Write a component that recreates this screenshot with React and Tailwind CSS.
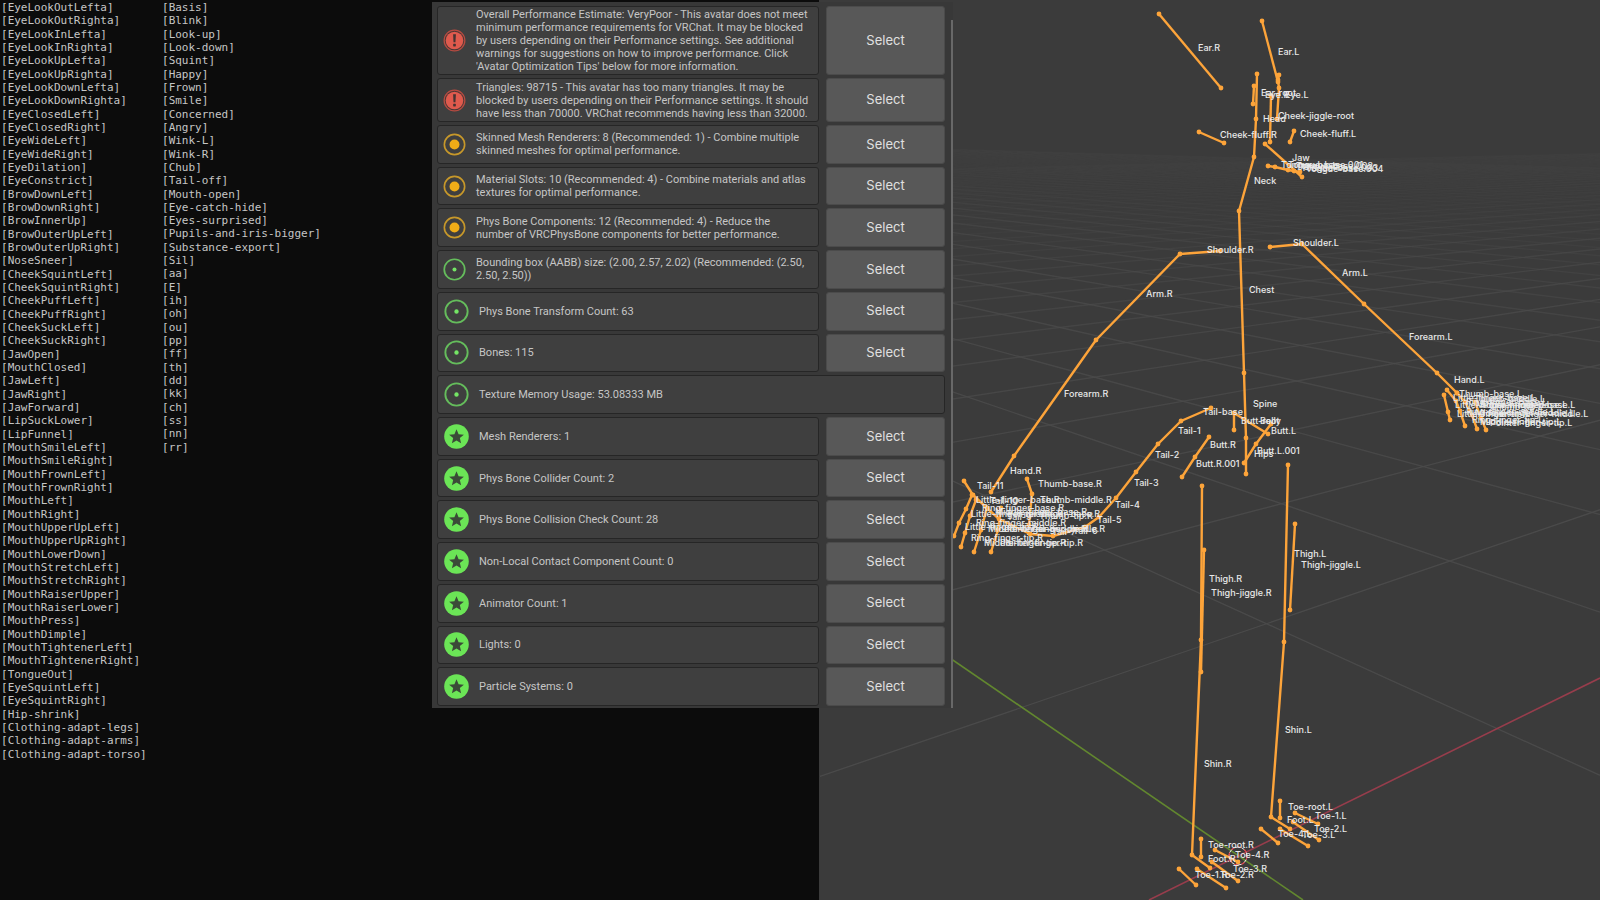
const SHAPE_KEYS = [
    "EyeLookOutLefta", "EyeLookOutRighta", "EyeLookInLefta", "EyeLookInRighta",
    "EyeLookUpLefta", "EyeLookUpRighta", "EyeLookDownLefta", "EyeLookDownRighta",
    "EyeClosedLeft", "EyeClosedRight", "EyeWideLeft", "EyeWideRight",
    "EyeDilation", "EyeConstrict", "BrowDownLeft", "BrowDownRight",
    "BrowInnerUp", "BrowOuterUpLeft", "BrowOuterUpRight", "NoseSneer",
    "CheekSquintLeft", "CheekSquintRight", "CheekPuffLeft", "CheekPuffRight",
    "CheekSuckLeft", "CheekSuckRight", "JawOpen", "MouthClosed",
    "JawLeft", "JawRight", "JawForward", "LipSuckLower",
    "LipFunnel", "MouthSmileLeft", "MouthSmileRight", "MouthFrownLeft",
    "MouthFrownRight", "MouthLeft", "MouthRight", "MouthUpperUpLeft",
    "MouthUpperUpRight", "MouthLowerDown", "MouthStretchLeft", "MouthStretchRight",
    "MouthRaiserUpper", "MouthRaiserLower", "MouthPress", "MouthDimple",
    "MouthTightenerLeft", "MouthTightenerRight", "TongueOut", "EyeSquintLeft",
    "EyeSquintRight", "Hip-shrink", "Clothing-adapt-legs", "Clothing-adapt-arms",
    "Clothing-adapt-torso",
];

const EXPRESSION_KEYS = [
    "Basis", "Blink", "Look-up", "Look-down", "Squint", "Happy", "Frown", "Smile",
    "Concerned", "Angry", "Wink-L", "Wink-R", "Chub", "Tail-off", "Mouth-open",
    "Eye-catch-hide", "Eyes-surprised", "Pupils-and-iris-bigger", "Substance-export",
    "Sil", "aa", "E", "ih", "oh", "ou", "pp", "ff", "th", "dd", "kk", "ch", "ss",
    "nn", "rr",
];

const WARNINGS = [
    {
        level: "error",
        text: "Overall Performance Estimate: VeryPoor - This avatar does not meet\nminimum performance requirements for VRChat. It may be blocked\nby users depending on their Performance settings. See additional\nwarnings for suggestions on how to improve performance. Click\n'Avatar Optimization Tips' below for more information.",
    },
    {
        level: "error",
        text: "Triangles: 98715 - This avatar has too many triangles. It may be\nblocked by users depending on their Performance settings. It should\nhave less than 70000. VRChat recommends having less than 32000.",
    },
];

const STATS = [
    {level: "medium", text: "Skinned Mesh Renderers: 8 (Recommended: 1) - Combine multiple\nskinned meshes for optimal performance."},
    {level: "medium", text: "Material Slots: 10 (Recommended: 4) - Combine materials and atlas\ntextures for optimal performance."},
    {level: "medium", text: "Phys Bone Components: 12 (Recommended: 4) - Reduce the\nnumber of VRCPhysBone components for better performance."},
    {level: "good", text: "Bounding box (AABB) size: (2.00, 2.57, 2.02) (Recommended: (2.50,\n2.50, 2.50))"},
    {level: "good", short: true, text: "Phys Bone Transform Count: 63"},
    {level: "good", short: true, text: "Bones: 115"},
    {level: "good", short: true, noSelect: true, text: "Texture Memory Usage: 53.08333 MB"},
    {level: "excellent", short: true, text: "Mesh Renderers: 1"},
    {level: "excellent", short: true, text: "Phys Bone Collider Count: 2"},
    {level: "excellent", short: true, text: "Phys Bone Collision Check Count: 28"},
    {level: "excellent", short: true, text: "Non-Local Contact Component Count: 0"},
    {level: "excellent", short: true, text: "Animator Count: 1"},
    {level: "excellent", short: true, text: "Lights: 0"},
    {level: "excellent", short: true, text: "Particle Systems: 0"},
];

// Each chain is a list of joints, drawn with a dot on every joint
const BONES = [
    [[1159, 14], [1221, 88]],
    [[1262, 21], [1278, 82]],
    [[1279, 75], [1278, 80], [1279, 88], [1277, 119]],
    [[1271, 96], [1270, 142]],
    [[1254, 86], [1253, 104]],
    [[1257, 74], [1256, 119], [1254, 157], [1239, 211], [1244, 373], [1246, 438], [1246, 474]],
    [[1265, 144], [1302, 177]],
    [[1268, 166], [1275, 167], [1288, 170], [1294, 171], [1300, 172]],
    [[1199, 132], [1224, 143]],
    [[1294, 131], [1290, 142]],
    [[1220, 251], [1180, 254], [1096, 340], [1014, 456], [991, 492]],
    [[1270, 247], [1302, 244], [1364, 304], [1437, 373], [1457, 393]],
    [[1444, 395], [1448, 412], [1450, 420]],
    [[1447, 390], [1456, 401], [1460, 411], [1465, 426]],
    [[1457, 393], [1465, 402], [1472, 415], [1477, 429]],
    [[1475, 402], [1481, 418], [1486, 430]],
    [[1211, 408], [1181, 421], [1158, 444], [1136, 472], [1116, 498], [1099, 517], [1085, 527], [1053, 536], [1030, 534], [999, 519], [987, 508], [973, 495], [964, 481]],
    [[972, 495], [966, 509], [959, 523], [954, 536]],
    [[976, 500], [970, 516], [965, 533], [961, 547]],
    [[987, 508], [981, 530], [974, 552]],
    [[1001, 508], [998, 530], [991, 552]],
    [[1027, 479], [1032, 494], [1029, 525]],
    [[1209, 437], [1195, 457], [1182, 477]],
    [[1234, 430], [1234, 413], [1268, 434]],
    [[1271, 424], [1256, 444], [1244, 463]],
    [[1202, 486], [1201, 640], [1192, 855], [1210, 868]],
    [[1204, 550], [1201, 672]],
    [[1288, 465], [1284, 642], [1271, 817], [1290, 829]],
    [[1295, 524], [1290, 610]],
    [[1201, 839], [1201, 857]],
    [[1215, 850], [1238, 862]],
    [[1212, 862], [1238, 881]],
    [[1197, 869], [1226, 888]],
    [[1179, 869], [1196, 885]],
    [[1280, 801], [1280, 818]],
    [[1295, 813], [1318, 824]],
    [[1293, 822], [1319, 840]],
    [[1280, 829], [1308, 846]],
    [[1261, 829], [1278, 843]],
];

const BONE_LABELS = [
    ["Ear.R", 1198, 51], ["Ear.L", 1278, 55], ["Ear-root", 1261, 96],
    ["Eye.R", 1265, 98], ["Eye.L", 1285, 98], ["Head", 1263, 122],
    ["Cheek-jiggle-root", 1278, 119], ["Cheek-fluff.R", 1220, 138],
    ["Cheek-fluff.L", 1300, 137], ["Jaw", 1292, 161],
    ["Tongue-base", 1281, 168], ["Tongue-base.001", 1288, 168],
    ["Tongue-base.002", 1296, 169], ["Tongue-base.003", 1301, 171],
    ["Tongue-base.004", 1306, 172], ["Neck", 1254, 184],
    ["Shoulder.R", 1207, 253], ["Shoulder.L", 1293, 246],
    ["Arm.L", 1342, 276], ["Arm.R", 1146, 297], ["Chest", 1249, 293],
    ["Forearm.L", 1409, 340], ["Hand.L", 1454, 383], ["Forearm.R", 1064, 397],
    ["Spine", 1253, 407], ["Tail-base", 1203, 415], ["Tail-1", 1178, 434],
    ["Tail-2", 1155, 458], ["Tail-3", 1134, 486], ["Tail-4", 1115, 508],
    ["Tail-5", 1097, 523], ["Butt-root", 1241, 424], ["Belly", 1260, 424],
    ["Butt.L", 1271, 434], ["Butt.R", 1210, 448], ["Butt.L.001", 1257, 454],
    ["Hips", 1254, 457], ["Butt.R.001", 1196, 467], ["Hand.R", 1010, 474],
    ["Tail-11", 977, 489], ["Thumb-base.R", 1038, 487],
    ["Little-finger-base.R", 976, 503], ["Thumb-middle.R", 1040, 503],
    ["Tail-10", 990, 504], ["Ring-finger-base.R", 982, 511],
    ["Little-finger-middle.R", 971, 517], ["Middle-finger-base.R", 995, 515],
    ["Pointer-finger-base.R", 1007, 517], ["Tail-9", 1007, 520],
    ["Thumb-tip.R", 1039, 519], ["Ring-finger-middle.R", 976, 526],
    ["Little-finger-tip.R", 965, 530], ["Middle-finger-middle.R", 988, 532],
    ["Pointer-finger-middle.R", 1004, 532], ["Tail-8", 1030, 532],
    ["Tail-7", 1052, 535], ["Tail-6", 1073, 534],
    ["Ring-finger-tip.R", 971, 541], ["Middle-finger-tip.R", 984, 546],
    ["Pointer-finger-tip.R", 1000, 546], ["Thumb-base.L", 1459, 397],
    ["Little-finger-base.L", 1453, 401], ["Thumb-middle.L", 1474, 402],
    ["Ring-finger-base.L", 1466, 405], ["Little-finger-middle.L", 1455, 408],
    ["Middle-finger-base.L", 1476, 408], ["Pointer-finger-base.L", 1483, 408],
    ["Thumb-tip.L", 1490, 410], ["Ring-finger-middle.L", 1466, 415],
    ["Little-finger-tip.L", 1457, 417], ["Middle-finger-middle.L", 1475, 416],
    ["Pointer-finger-middle.L", 1488, 417], ["Ring-finger-tip.L", 1472, 423],
    ["Middle-finger-tip.L", 1480, 425], ["Pointer-finger-tip.L", 1490, 426],
    ["Thigh.L", 1294, 557], ["Thigh-jiggle.L", 1301, 568],
    ["Thigh.R", 1209, 582], ["Thigh-jiggle.R", 1211, 596],
    ["Shin.L", 1285, 733], ["Shin.R", 1204, 767], ["Toe-root.L", 1288, 810],
    ["Toe-1.L", 1315, 819], ["Foot.L", 1287, 823], ["Toe-2.L", 1314, 832],
    ["Toe-4.L", 1278, 837], ["Toe-3.L", 1302, 838], ["Toe-root.R", 1208, 848],
    ["Toe-4.R", 1235, 858], ["Foot.R", 1208, 862], ["Toe-3.R", 1233, 872],
    ["Toe-1.R", 1195, 878], ["Toe-2.R", 1220, 878],
];

// Both families of floor lines run to a vanishing point on the horizon
const HORIZON = 127;
const GRID = Array.from({length: 45}, (_, i) => i + 1).flatMap((k) => {
    const opacity = Math.max(0.15, 1 - k * 0.05);
    const right = 2.033 + 0.893 * k;
    const left = 1.4595 + 0.74 * k;
    return [
        {id: `x${k}`, opacity, x1: 820, y1: HORIZON + (2720 - 820) / right, x2: 1600, y2: HORIZON + (2720 - 1600) / right},
        {id: `y${k}`, opacity, x1: 820, y1: HORIZON + (820 - 174) / left, x2: 1600, y2: HORIZON + (1600 - 174) / left},
    ];
});

function LevelIcon({level, short}) {
    const size = short ? "size-[25px] shrink-0" : "size-[23px] shrink-0";

    if (level === "error") {
        return (
            <svg viewBox="0 0 24 24" className={size} aria-hidden="true">
                <circle cx="12" cy="12" r="10.8" fill="#4a3735" stroke="#b84b41" strokeWidth="1.3"/>
                <circle cx="12" cy="12" r="9.2" fill="#df5a4d"/>
                <path d="M10.5 5.5h3l-.5 8.2h-2z" fill="#453331"/>
                <rect x="10.6" y="15.4" width="2.8" height="2.8" rx=".6" fill="#453331"/>
            </svg>
        );
    }

    if (level === "medium") {
        return (
            <svg viewBox="0 0 24 24" className={size} aria-hidden="true">
                <circle cx="12" cy="12" r="10.6" fill="none" stroke="#c7982a" strokeWidth="1.7"/>
                <circle cx="12" cy="12" r="5.2" fill="#efac17"/>
            </svg>
        );
    }

    if (level === "good") {
        return (
            <svg viewBox="0 0 24 24" className={size} aria-hidden="true">
                <circle cx="12" cy="12" r="10.7" fill="none" stroke="#65bd5c" strokeWidth="1.8"/>
                <circle cx="12" cy="12" r="2.1" fill="#74e565"/>
            </svg>
        );
    }

    return (
        <svg viewBox="0 0 24 24" className={size} aria-hidden="true">
            <circle cx="12" cy="12" r="11.8" fill="#6be556"/>
            <path
                d="M12 5l2 4.8 5.1.4-3.9 3.3 1.2 5L12 15.8l-4.4 2.7 1.2-5-3.9-3.3 5.1-.4z"
                fill="#3b4a38"
            />
        </svg>
    );
}

function StatRow({row}) {
    return (
        <li className="flex gap-[7px]">
            <div
                className={`flex min-w-0 flex-1 items-center gap-[10px] rounded-[3px] border border-[#262626] bg-[#3f3f3f] ${
                    row.short ? "pl-[6px]" : "pl-[5px]"
                }`}
            >
                <LevelIcon level={row.level} short={row.short}/>
                <p className="whitespace-pre font-[Roboto,sans-serif] text-[11px] leading-[13px] text-[#c6c6c6]">
                    {row.text}
                </p>
            </div>

            {!row.noSelect && (
                <button
                    type="button"
                    className="w-[119px] shrink-0 rounded-[3px] border border-[#4b4b4b] bg-[#585858] text-[13px] text-[#e0e0e0]"
                >
                    Select
                </button>
            )}
        </li>
    );
}

function PerformancePanel() {
    return (
        <section
            aria-label="Avatar performance"
            className="absolute left-[27%] top-[2px] flex w-[521px] bg-[#383838] font-[Inter,sans-serif]"
        >
            <div className="flex min-w-0 flex-1 flex-col gap-[3px] pb-[2px] pl-[5px] pr-[6px] pt-1">
                <ul className="grid grid-rows-[69px_44px] gap-[3px]">
                    {WARNINGS.map((row) => (
                        <StatRow key={row.text} row={row}/>
                    ))}
                </ul>
                <ul className="grid h-[581px] auto-rows-fr gap-[3px]">
                    {STATS.map((row) => (
                        <StatRow key={row.text} row={row}/>
                    ))}
                </ul>
            </div>
            <div className="mt-[18px] w-[2px] bg-[#686868]"/>
        </section>
    );
}

function KeyList({keys, className}) {
    return (
        <ul className={`grid auto-rows-fr content-start text-[11px] leading-[13px] ${className}`}>
            {keys.map((key) => (
                <li key={key}>[{key}]</li>
            ))}
        </ul>
    );
}

function Viewport() {
    return (
        <svg
            viewBox="819 0 781 900"
            preserveAspectRatio="xMinYMin slice"
            className="absolute inset-0 h-full w-full"
            role="img"
            aria-label="Armature in the 3D viewport"
        >
            {/* FLOOR */}
            <g stroke="#4b4b4b" strokeWidth="1.4">
                {GRID.map(({id, ...line}) => (
                    <line key={id} {...line}/>
                ))}
            </g>
            <line x1="820" y1="569" x2="1303" y2="900" stroke="#62872f" strokeWidth="1.6"/>
            <line x1="1149" y1="900" x2="1600" y2="678" stroke="#973d4c" strokeWidth="1.6"/>

            {/* BONES */}
            <g fill="none" stroke="#fda43a" strokeWidth="2.4" strokeLinejoin="round">
                {BONES.map((joints, i) => (
                    <polyline key={i} points={joints.join(" ")}/>
                ))}
            </g>
            <g fill="#fda43a">
                {BONES.flatMap((joints, i) =>
                    joints.map(([x, y], j) => (
                        <circle key={`${i}-${j}`} cx={x} cy={y} r="2.4"/>
                    ))
                )}
            </g>

            {/* 3D CURSOR */}
            <circle cx="1238" cy="856" r="9" fill="none" stroke="#e8e8e8" strokeWidth="1"/>
            <circle cx="1238" cy="856" r="9" fill="none" stroke="#d8343c" strokeWidth="1.2" strokeDasharray="3.5 3.5"/>

            {/* NAMES */}
            <g fill="#e9e9e9" className="font-[Inter,sans-serif] text-[9px] font-medium">
                {BONE_LABELS.map(([name, x, y]) => (
                    <text key={name} x={x} y={y}>{name}</text>
                ))}
            </g>
        </svg>
    );
}

export default function App() {
    return (
        <main className="relative flex min-h-screen overflow-hidden bg-[#0c0c0c]">
            <section
                aria-label="Shape keys"
                className="flex w-[51.2%] items-start pl-px pt-px font-['DejaVu_Sans_Mono',monospace] text-[#c6c6c6]"
            >
                <KeyList keys={SHAPE_KEYS} className="h-[760px] w-[161px]"/>
                <KeyList keys={EXPRESSION_KEYS} className="h-[453px]"/>
            </section>

            <section aria-label="Viewport" className="relative flex-1 bg-[#3b3b3b]">
                <Viewport/>
            </section>

            <PerformancePanel/>
        </main>
    );
}
